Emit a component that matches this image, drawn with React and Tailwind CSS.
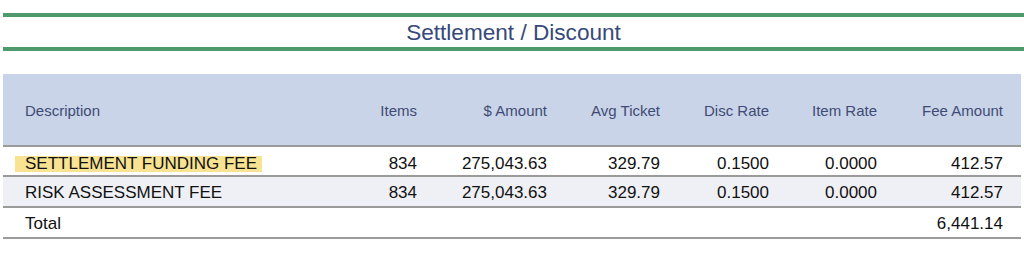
import React from "react";

const cols = "grid grid-cols-[314px_100px_130px_113px_109px_108px_126px] pr-[18px]";

const rows = [
  { d: "SETTLEMENT FUNDING FEE", hl: true, bg: "bg-white", v: ["834", "275,043.63", "329.79", "0.1500", "0.0000", "412.57"], h: "h-[30px] pt-[4px]" },
  { d: "RISK ASSESSMENT FEE", bg: "bg-[#eef0f5]", v: ["834", "275,043.63", "329.79", "0.1500", "0.0000", "412.57"], h: "h-[31px] pt-[3px]" },
  { d: "Total", bg: "bg-white", v: ["", "", "", "", "", "6,441.14"], h: "h-[31px] pt-[2px]" },
];

const heads = ["Items", "$ Amount", "Avg Ticket", "Disc Rate", "Item Rate", "Fee Amount"];

export default function App() {
  return (
    <div className="w-[1024px] h-[276px] bg-white pt-[13px] pl-[3px] font-['Liberation_Sans',Arial,sans-serif] overflow-hidden">
      <div className="h-[38px] pt-[3px] border-t-[4px] border-b-[4px] border-[#4f9a6c] flex items-center justify-center">
        <span className="text-[22.6px] leading-none text-[#36497a]">Settlement / Discount</span>
      </div>
      <div className="mt-[23px] w-[1018px]">
        <div className={`${cols} h-[73px] pt-[4px] bg-[#c9d4e8] border-b-2 border-[#9a9a9a] items-center text-[15px] text-[#3f4b74]`}>
          <div className="pl-[22px]">Description</div>
          {heads.map((h) => (
            <div key={h} className="text-right">{h}</div>
          ))}
        </div>
        {rows.map((r) => (
          <div key={r.d} className={`${cols} ${r.h} ${r.bg} border-b-2 border-[#9a9a9a] items-center text-[17px] text-[#111111]`}>
            <div className="pl-[22px] flex items-center">
              {r.hl ? (
                <span className="-ml-[10px] pl-[10px] pr-[5px] h-[16px] flex items-center bg-[#f8e392]">{r.d}</span>
              ) : (
                <span>{r.d}</span>
              )}
            </div>
            {r.v.map((x, i) => (
              <div key={i} className="text-right">{x}</div>
            ))}
          </div>
        ))}
      </div>
    </div>
  );
}
